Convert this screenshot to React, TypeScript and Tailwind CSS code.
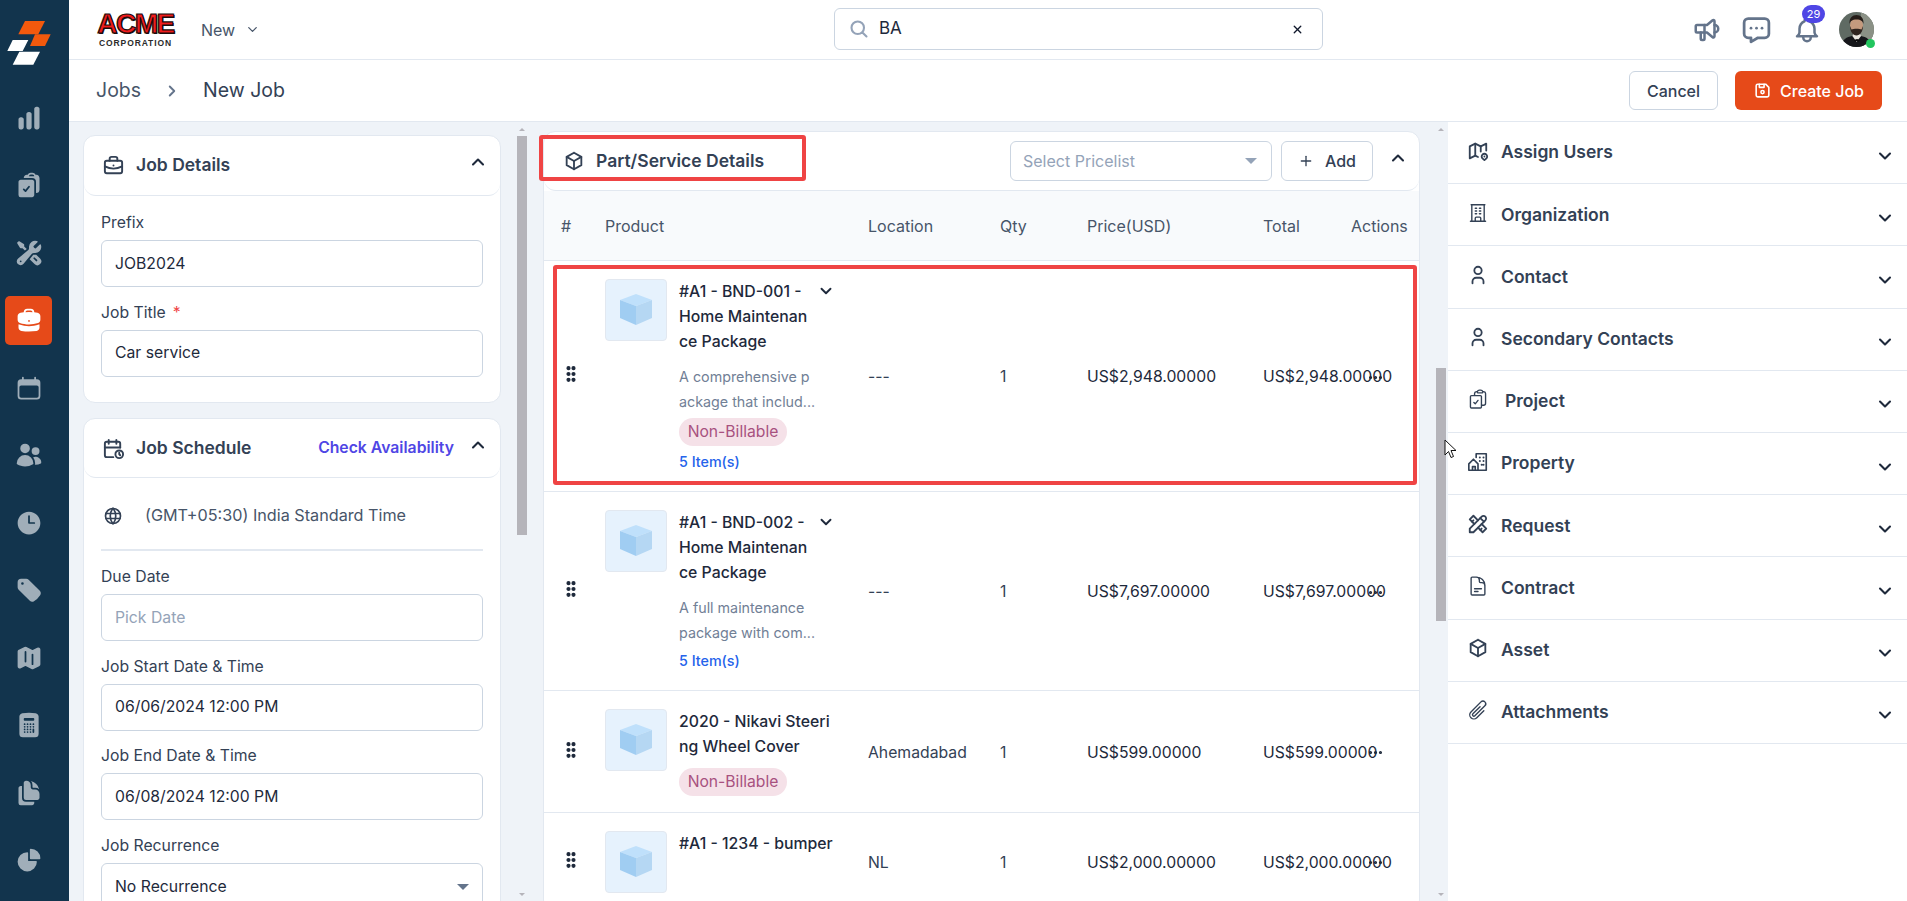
import React from "react"
import { ChevronDown, ChevronRight, ChevronUp, Ellipsis, Plus, X } from "lucide-react"
import {
  HiBriefcase,
  HiCalculator,
  HiCalendar,
  HiChartBar,
  HiChartPie,
  HiClipboardDocumentCheck,
  HiClock,
  HiDocumentDuplicate,
  HiMap,
  HiTag,
  HiUsers,
  HiWrenchScrewdriver,
  HiOutlineBuildingOffice,
  HiOutlineClipboardDocumentCheck,
  HiOutlineDocumentText,
  HiOutlineMagnifyingGlass,
  HiOutlinePaperClip,
} from "react-icons/hi2"
import {
  TbBell,
  TbBox,
  TbBriefcase,
  TbCalendarTime,
  TbDeviceFloppy,
  TbGripVertical,
  TbMap2,
  TbMessageDots,
  TbSpeakerphone,
  TbTools,
  TbUser,
  TbWorld,
} from "react-icons/tb"

const navIcons = [
  HiChartBar,
  HiClipboardDocumentCheck,
  HiWrenchScrewdriver,
  HiBriefcase,
  HiCalendar,
  HiUsers,
  HiClock,
  HiTag,
  HiMap,
  HiCalculator,
  HiDocumentDuplicate,
  HiChartPie,
]

function PropertyIcon({ className }: { className?: string }) {
  return (
    <svg viewBox="0 0 24 24" fill="none" stroke="currentColor" strokeWidth="1.800" strokeLinejoin="round" strokeLinecap="round" className={className}>
      <path d="M10 7V3h11v18H2v-7l5-5 5 5v7" />
      <path d="M6 21v-4h3v4" />
      <path d="M14 7h.01M18 7h.01M14 11h.01M18 11h.01M16 15h.01M18 15h.01" strokeWidth="2.200" />
    </svg>
  )
}

const sections = [
  { label: "Assign Users", icon: TbMap2 },
  { label: "Organization", icon: HiOutlineBuildingOffice },
  { label: "Contact", icon: TbUser },
  { label: "Secondary Contacts", icon: TbUser },
  { label: "Project", icon: HiOutlineClipboardDocumentCheck, shift: true },
  { label: "Property", icon: PropertyIcon },
  { label: "Request", icon: TbTools },
  { label: "Contract", icon: HiOutlineDocumentText },
  { label: "Asset", icon: TbBox },
  { label: "Attachments", icon: HiOutlinePaperClip },
]

const rows = [
  {
    title: ["#A1 - BND-001 -", "Home Maintenan", "ce Package"],
    desc: ["A comprehensive p", "ackage that includ..."],
    badge: true,
    items: true,
    location: "---",
    price: "US$2,948.00000",
    height: "h-[231px]",
  },
  {
    title: ["#A1 - BND-002 -", "Home Maintenan", "ce Package"],
    desc: ["A full maintenance", "package with com..."],
    badge: false,
    items: true,
    location: "---",
    price: "US$7,697.00000",
    height: "h-[199px]",
  },
  {
    title: ["2020 - Nikavi Steeri", "ng Wheel Cover"],
    desc: [],
    badge: true,
    items: false,
    location: "Ahemadabad",
    price: "US$599.00000",
    height: "h-[122px]",
  },
  {
    title: ["#A1 - 1234 - bumper"],
    desc: [],
    badge: false,
    items: false,
    location: "NL",
    price: "US$2,000.00000",
    height: "h-[98px]",
  },
]

function BrandMark() {
  return (
    <svg viewBox="0 0 69 84" className="w-[69px] h-[84px]">
      <polygon points="25,21 45,21 38.3,34.3 18.3,34.3" fill="#f2590d" />
      <polygon points="35,34.3 50.7,34.3 45,46 30,46" fill="#f2590d" />
      <polygon points="12.7,40 28.3,40 22.7,51 7.3,51" fill="#ffffff" />
      <polygon points="19.3,51.7 40,51.7 33.3,64.7 12.7,64.7" fill="#ffffff" />
    </svg>
  )
}

function AcmeLogo() {
  return (
    <div className="w-[77px] flex flex-col items-center font-['Liberation_Sans',sans-serif] leading-none">
      <div className="text-[28px] h-[25px] leading-[25px] font-bold text-[#ef1c1c] tracking-[-1.500px] [-webkit-text-stroke:1.200px_#220a0a] [text-shadow:1px_1px_0_#111]">
        ACME
      </div>
      <div className="text-[8.500px] mt-[3px] font-bold text-[#2b2b2b] tracking-[0.900px]">CORPORATION</div>
    </div>
  )
}

function Avatar() {
  return (
    <div className="relative w-[35px] h-[35px]">
      <svg viewBox="0 0 35 35" className="w-[35px] h-[35px] rounded-full">
        <rect width="35" height="35" fill="#5f6a63" />
        <rect x="22" width="13" height="35" fill="#8b9186" />
        <path d="M2 35c1-8 6-10 11-11l4.500 3 4.500-3c5 1 10 3 11 11z" fill="#15161a" />
        <path d="M13.500 24l4 6 4.500-6-1-3h-6.500z" fill="#e9e6e0" />
        <path d="M15 28l3-1 3 1-1 2-2-1-2 1z" fill="#0a0a0c" />
        <ellipse cx="17.500" cy="13.500" rx="6.500" ry="9" fill="#c49a7e" />
        <path d="M11 14c0 5.500 3 9.500 6.500 9.500s6.500-4 6.500-9.500l-1.500 3.500c-2-1-8-1-10 0z" fill="#2e241f" />
        <path d="M10.500 12c-.5-6 3-9 7-9s7.500 3 7 9c-1-3-2.500-4.500-7-4.500s-6 1.500-7 4.500z" fill="#241c18" />
      </svg>
      <span className="absolute right-[-1px] bottom-[-1px] w-[9px] h-[9px] rounded-full bg-[#22c55e]" />
    </div>
  )
}

function CubeThumb() {
  return (
    <div className="w-[62px] h-[62px] shrink-0 rounded-[4px] border border-[#e2e8f0] bg-[#e6f2fd] flex items-center justify-center">
      <svg viewBox="0 0 32 32" className="w-[32px] h-[32px]">
        <polygon points="16,0 32,6 16,12 0,6" fill="#bfe0fb" />
        <polygon points="0,6 16,12 16,31 0,24" fill="#a0cdf2" />
        <polygon points="32,6 16,12 16,31 32,24" fill="#b5d7f3" />
      </svg>
    </div>
  )
}

function Field({ label, required, value, placeholder, select }: { label: string; required?: boolean; value?: string; placeholder?: boolean; select?: boolean }) {
  return (
    <div className="mb-[14.700px]">
      <div className="h-[20px] leading-[22px] mb-[8px] text-[15.750px] text-[#334155]">
        {label}
        {required && <span className="ml-[7px] text-[#ef4444]">*</span>}
      </div>
      <div className="h-[47px] rounded-[6px] border border-[#cbd5e1] bg-white px-[13px] flex items-center justify-between">
        <span className={`text-[15.750px] ${placeholder ? "text-[#94a3b8]" : "text-[#1e293b]"}`}>{value}</span>
        {select && <span className="w-0 h-0 border-x-[6px] border-x-transparent border-t-[6px] border-t-[#64748b]" />}
      </div>
    </div>
  )
}

function Scrollbar({ thumb }: { thumb: string }) {
  return (
    <div className="w-[10px] shrink-0 relative">
      <span className="absolute left-[2px] top-[6px] w-0 h-0 border-x-[3px] border-x-transparent border-b-[3px] border-b-[#b5b4ba]" />
      <div className={`w-[10px] bg-[#b5b4ba] ${thumb}`} />
      <span className="absolute left-[2px] bottom-[5px] w-0 h-0 border-x-[3px] border-x-transparent border-t-[3px] border-t-[#b5b4ba]" />
    </div>
  )
}

function RowCols({ children, className }: { children: React.ReactNode; className?: string }) {
  return <div className={`grid grid-cols-[44px_263px_132px_87px_176px_88px_69px] pl-[17px] ${className ?? ""}`}>{children}</div>
}

export default function App() {
  return (
    <div className="flex h-screen w-full overflow-hidden bg-white font-[Inter,sans-serif] text-[#1e293b]">
      {/* Sidebar */}
      <aside className="w-[69px] shrink-0 bg-[#12344d] flex flex-col pl-[5px]">
        <div className="-ml-[5px]">
          <BrandMark />
        </div>
        {navIcons.map((Icon, i) => (
          <div key={i} className="h-[67.5px] flex items-center">
            <div className={`w-[47px] h-[49px] rounded-[5px] flex items-center justify-center ${i === 3 ? "bg-[#e64a19] text-white" : "text-[#a0aeb9]"}`}>
              <Icon className="w-[28px] h-[28px]" />
            </div>
          </div>
        ))}
      </aside>

      <div className="flex-1 min-w-0 flex flex-col">
        {/* Top bar */}
        <header className="h-[60px] shrink-0 border-b border-[#e2e8f0] flex items-center pl-[28px] pr-[33px] relative">
          <AcmeLogo />
          <span className="ml-[27px] text-[16px] text-[#475569]">New</span>
          <ChevronDown className="ml-[10px] w-[15px] h-[15px] text-[#475569]" />
          <div className="absolute left-[765px] top-[8px] w-[489px] h-[42px] rounded-[6px] border border-[#cbd5e1] flex items-center px-[14px]">
            <HiOutlineMagnifyingGlass className="w-[20px] h-[20px] text-[#94a3b8] stroke-[2.500]" />
            <span className="ml-[10px] text-[17px] text-[#1e293b]">BA</span>
            <X className="ml-auto mr-[4px] w-[13px] h-[13px] text-[#0f172a] stroke-[2.500]" />
          </div>
          <div className="ml-auto flex items-center">
            <TbSpeakerphone className="w-[30px] h-[30px] text-[#64748b] mr-[18px]" />
            <TbMessageDots className="w-[33px] h-[33px] text-[#64748b] mr-[19px]" />
            <div className="relative mr-[17px]">
              <TbBell className="w-[30px] h-[30px] text-[#64748b]" />
              <span className="absolute left-[10px] top-[-10px] w-[23px] h-[18px] rounded-full bg-[#4f46e5] text-white text-[11px] leading-[18px] text-center">29</span>
            </div>
            <Avatar />
          </div>
        </header>

        {/* Breadcrumb bar */}
        <div className="h-[62px] shrink-0 border-b border-[#e2e8f0] flex items-center pl-[27px] pr-[25px]">
          <span className="text-[19.500px] text-[#475569]">Jobs</span>
          <ChevronRight className="ml-[22px] w-[18px] h-[18px] text-[#64748b] stroke-[2.500]" />
          <span className="ml-[22px] text-[19.500px] text-[#334155]">New Job</span>
          <button className="ml-auto h-[39px] w-[89px] rounded-[6px] border border-[#cbd5e1] text-[16px] font-medium text-[#334155]">Cancel</button>
          <button className="ml-[17px] h-[39px] w-[147px] rounded-[6px] bg-[#e64a19] text-white text-[16px] font-medium flex items-center justify-center gap-[8px]">
            <TbDeviceFloppy className="w-[19px] h-[19px]" />
            Create Job
          </button>
        </div>

        {/* Body */}
        <div className="flex-1 min-h-0 flex bg-[#eff3f8] overflow-hidden relative">
          {/* Left column */}
          <div className="w-[448px] shrink-0 pl-[14px] pr-[16px] pt-[13px] overflow-hidden">
            <section className="rounded-xl border border-[#e2e8f0] bg-white h-[268px] mb-[15px]">
              <div className="h-[60px] rounded-xl border-b border-[#e2e8f0] flex items-center pl-[18px] pr-[12px]">
                <TbBriefcase className="w-[23px] h-[23px] text-[#334155]" />
                <h3 className="ml-[11px] text-[17.500px] font-semibold text-[#334155]">Job Details</h3>
                <ChevronUp className="ml-auto -mt-[7px] w-[20px] h-[20px] text-[#1e293b] stroke-[2.500]" />
              </div>
              <div className="px-[17px] pt-[16px]">
                <Field label="Prefix" value="JOB2024" />
                <Field label="Job Title" required value="Car service" />
              </div>
            </section>

            <section className="rounded-xl border border-[#e2e8f0] bg-white">
              <div className="h-[59px] rounded-xl border-b border-[#e2e8f0] flex items-center pl-[18px] pr-[12px]">
                <TbCalendarTime className="w-[23px] h-[23px] text-[#334155]" />
                <h3 className="ml-[11px] text-[17.500px] font-semibold text-[#334155]">Job Schedule</h3>
                <span className="ml-auto text-[15.750px] font-semibold text-[#4f46e5]">Check Availability</span>
                <ChevronUp className="ml-[14px] -mt-[7px] w-[20px] h-[20px] text-[#1e293b] stroke-[2.500]" />
              </div>
              <div className="px-[17px]">
                <div className="h-[73px] border-b-2 border-[#e2e8f0] flex items-center pl-[2px] pt-[4px]">
                  <TbWorld className="w-[20px] h-[20px] text-[#334155]" />
                  <span className="ml-[22px] text-[16.200px] text-[#475569]">(GMT+05:30) India Standard Time</span>
                </div>
                <div className="pt-[15px]">
                  <Field label="Due Date" value="Pick Date" placeholder />
                  <Field label="Job Start Date &amp; Time" value="06/06/2024 12:00 PM" />
                  <Field label="Job End Date &amp; Time" value="06/08/2024 12:00 PM" />
                  <Field label="Job Recurrence" value="No Recurrence" select />
                </div>
              </div>
            </section>
          </div>
          <Scrollbar thumb="mt-[14px] h-[399px]" />

          {/* Center column */}
          <div className="w-[909px] shrink-0 pl-[16px] pr-[16px] pt-[9px] overflow-hidden">
            <section className="rounded-xl border border-[#e2e8f0] bg-white">
              <div className="h-[59px] rounded-xl border-b border-[#e2e8f0] flex items-center pl-[19px] pr-[11px]">
                <TbBox className="w-[22px] h-[22px] text-[#334155]" />
                <h3 className="ml-[11px] text-[17.500px] font-semibold text-[#334155]">Part/Service Details</h3>
                <div className="ml-auto w-[262px] h-[40px] rounded-[6px] border border-[#cbd5e1] flex items-center justify-between pl-[12px] pr-[14px]">
                  <span className="text-[16px] text-[#94a3b8]">Select Pricelist</span>
                  <span className="w-0 h-0 border-x-[6px] border-x-transparent border-t-[6px] border-t-[#94a3b8]" />
                </div>
                <button className="ml-[9px] w-[92px] h-[40px] rounded-[6px] border border-[#cbd5e1] flex items-center justify-center gap-[11px] text-[16px] font-medium text-[#334155]">
                  <Plus className="w-[16px] h-[16px]" />
                  Add
                </button>
                <ChevronUp className="ml-[15px] -mt-[7px] w-[20px] h-[20px] text-[#1e293b] stroke-[2.500]" />
              </div>
              <RowCols className="h-[70px] items-center bg-[#f8fafc] border-b border-[#e2e8f0] text-[16px] text-[#475569]">
                <span>#</span>
                <span>Product</span>
                <span>Location</span>
                <span>Qty</span>
                <span>Price(USD)</span>
                <span>Total</span>
                <span>Actions</span>
              </RowCols>
              {rows.map((row, i) => (
                <RowCols key={i} className={`items-center border-b border-[#e2e8f0] ${row.height}`}>
                  <TbGripVertical className="-mt-[4px] w-[20px] h-[20px] text-[#1e293b] stroke-[3]" />
                  <div className="self-start pt-[18px] flex gap-[12px]">
                    <CubeThumb />
                    <div className="relative min-w-0">
                      {row.title.map((line) => (
                        <div key={line} className="h-[25px] leading-[25px] whitespace-nowrap text-[15.800px] font-[450] text-[#1e293b]">{line}</div>
                      ))}
                      {row.items && <ChevronDown className="absolute left-[138px] top-[3px] w-[18px] h-[18px] text-[#1e293b] stroke-[2.500]" />}
                      {row.desc.length > 0 && (
                        <div className="mt-[10px]">
                          {row.desc.map((line) => (
                            <div key={line} className="h-[25px] leading-[25px] whitespace-nowrap text-[14.300px] text-[#718096]">{line}</div>
                          ))}
                        </div>
                      )}
                      {row.badge && (
                        <div className={`${row.desc.length > 0 ? "mt-[4px]" : "mt-[9px]"} w-[108px] h-[28px] rounded-full bg-[#f5e1e8] text-center leading-[28px] text-[15.700px] text-[#a8517f]`}>Non-Billable</div>
                      )}
                      {row.items && <div className={`${row.badge ? "mt-[6px]" : "mt-[6px]"} h-[20px] leading-[20px] text-[14.300px] font-medium text-[#2563eb]`}>5 Item(s)</div>}
                    </div>
                  </div>
                  <span className="pt-[2px] text-[15.750px] text-[#334155]">{row.location}</span>
                  <span className="pt-[2px] text-[15.750px] text-[#334155]">1</span>
                  <span className="pt-[2px] text-[15.750px] text-[#1e293b] whitespace-nowrap">{row.price}</span>
                  <span className="pt-[2px] text-[15.750px] text-[#1e293b] whitespace-nowrap">{row.price}</span>
                  <Ellipsis className="ml-[16px] mt-[2px] w-[17px] h-[17px] text-[#1e293b] stroke-[2.500]" />
                </RowCols>
              ))}
            </section>
          </div>
          <Scrollbar thumb="mt-[246px] h-[253px]" />

          {/* Right column */}
          <div className="w-[459px] shrink-0 ml-[2px] bg-white self-stretch">
            {sections.map((s) => (
              <div key={s.label} className="h-[62.200px] border-b border-[#e2e8f0] flex items-center pl-[19px] pr-[12px]">
                <s.icon className="w-[22px] h-[22px] text-[#334155] -mt-[4px]" />
                <span className={`${s.shift ? "ml-[16px]" : "ml-[12px]"} text-[17.500px] font-semibold text-[#334155]`}>{s.label}</span>
                <ChevronDown className="ml-auto mt-[6px] w-[20px] h-[20px] text-[#1e293b] stroke-[2.500]" />
              </div>
            ))}
          </div>

          {/* Review annotations */}
          <div className="absolute left-[470px] top-[13px] w-[267px] h-[46px] rounded-[3px] border-4 border-[#ef4444]" />
          <div className="absolute left-[484px] top-[143px] w-[864px] h-[220px] rounded-[3px] border-4 border-[#ef4444]" />
          {/* Mouse pointer */}
          <svg viewBox="0 0 12 20" className="absolute left-[1375px] top-[317px] w-[12px] h-[20px]">
            <path d="M1 1v15l3.500-3.500 2.500 6 2.500-1-2.500-6h5z" fill="#fff" stroke="#111" strokeWidth="1" />
          </svg>
        </div>
      </div>
    </div>
  )
}
